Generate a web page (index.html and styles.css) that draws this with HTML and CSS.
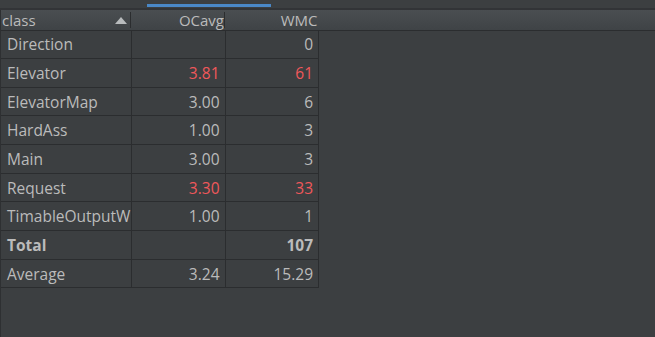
FILE: index.html
```html
<!DOCTYPE html>
<html lang="en">
<head>
    <meta charset="UTF-8">
    <title>Metrics</title>
    <link rel="stylesheet" href="styles.css">
</head>
<body>
    <div class="tabs">
        <span class="tab-active"></span>
    </div>
    <div class="panel">
        <table class="metrics">
            <thead>
                <tr>
                    <th class="name">class <span class="sort"></span></th>
                    <th>OCavg</th>
                    <th>WMC</th>
                </tr>
            </thead>
            <tbody>
                <tr><td class="name">Direction</td><td></td><td>0</td></tr>
                <tr><td class="name">Elevator</td><td class="warn">3.81</td><td class="warn">61</td></tr>
                <tr><td class="name">ElevatorMap</td><td>3.00</td><td>6</td></tr>
                <tr><td class="name">HardAss</td><td>1.00</td><td>3</td></tr>
                <tr><td class="name">Main</td><td>3.00</td><td>3</td></tr>
                <tr><td class="name">Request</td><td class="warn">3.30</td><td class="warn">33</td></tr>
                <tr><td class="name">TimableOutputW</td><td>1.00</td><td>1</td></tr>
                <tr class="total"><td class="name">Total</td><td></td><td>107</td></tr>
                <tr><td class="name">Average</td><td>3.24</td><td>15.29</td></tr>
            </tbody>
        </table>
    </div>
</body>
</html>
```

FILE: styles.css
```css
body {
    margin: 0;
    width: 655px;
    height: 337px;
    overflow: hidden;
    background: #3c3f41;
    font-family: "Open Sans", "Noto Sans", sans-serif;
    font-size: 15.5px;
    color: #bbbbbb;
}

.tabs {
    height: 8px;
    background: #3c3f41;
    border-bottom: 2px solid #323437;
    position: relative;
}

.tab-active {
    position: absolute;
    left: 147px;
    top: 4px;
    width: 124px;
    height: 3px;
    background: #4a88c7;
}

/* header strip runs across the whole panel, not only the table */
.panel {
    border-left: 1px solid #2e3032;
    height: 327px;
    background: linear-gradient(#4a4e51, #3f4346) no-repeat;
    background-size: 100% 20px;
    position: relative;
}

.panel::after {
    content: "";
    position: absolute;
    left: 0;
    right: 0;
    top: 20px;
    height: 1px;
    background: #2b2d2f;
}

.metrics {
    border-collapse: collapse;
    table-layout: fixed;
    width: 318px;
}

.metrics th {
    height: 20px;
    padding: 0 1px 0 0;
    font-size: 15px;
    font-weight: normal;
    text-align: right;
    position: relative;
    line-height: 18px;
}

.metrics th + th::before {
    content: "";
    position: absolute;
    left: -1px;
    top: 2px;
    bottom: 2px;
    width: 1px;
    background: #2b2d2f;
}

.metrics th.name {
    text-align: left;
    padding-left: 1px;
    width: 128px;
}

.metrics th:nth-child(2) {
    width: 93px;
}

.sort {
    position: absolute;
    right: 4px;
    top: 7px;
    width: 0;
    height: 0;
    border-left: 6px solid transparent;
    border-right: 6px solid transparent;
    border-bottom: 7px solid #b8bbbd;
}

.metrics tbody tr {
    height: 28.67px;
}

.metrics td {
    padding: 0 5px 0 0;
    text-align: right;
    border: 1px solid #2b2d2f;
    border-top: none;
    border-left: none;
    white-space: nowrap;
    overflow: hidden;
}

.metrics td + td {
    border-left: 1px solid #2b2d2f;
}

.metrics td.name {
    text-align: left;
    padding-left: 6px;
}

.warn {
    color: #f0585b;
}

.total td {
    font-weight: bold;
}
```
